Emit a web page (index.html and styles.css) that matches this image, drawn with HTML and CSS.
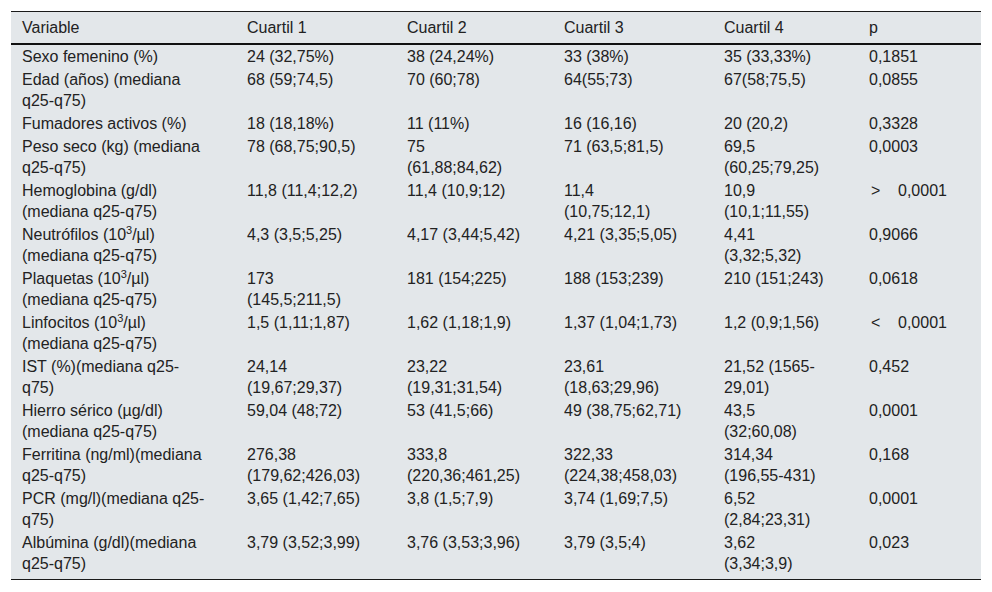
FILE: index.html
```html
<!DOCTYPE html>
<html lang="es">
<head>
<meta charset="utf-8">
<title>Tabla cuartiles</title>
<link rel="stylesheet" href="styles.css">
</head>
<body>
<div class="wrap">
<table class="data">
<colgroup>
<col class="c1"><col class="c2"><col class="c3"><col class="c4"><col class="c5"><col class="c6">
</colgroup>
<thead>
<tr><th>Variable</th><th>Cuartil 1</th><th>Cuartil 2</th><th>Cuartil 3</th><th>Cuartil 4</th><th>p</th></tr>
</thead>
<tbody>
<tr><td>Sexo femenino (%)</td><td>24 (32,75%)</td><td>38 (24,24%)</td><td>33 (38%)</td><td>35 (33,33%)</td><td>0,1851</td></tr>
<tr><td>Edad (años) (mediana<br>q25-q75)</td><td>68 (59;74,5)</td><td>70 (60;78)</td><td>64(55;73)</td><td>67(58;75,5)</td><td>0,0855</td></tr>
<tr><td>Fumadores activos (%)</td><td>18 (18,18%)</td><td>11 (11%)</td><td>16 (16,16)</td><td>20 (20,2)</td><td>0,3328</td></tr>
<tr><td>Peso seco (kg) (mediana<br>q25-q75)</td><td>78 (68,75;90,5)</td><td>75<br>(61,88;84,62)</td><td>71 (63,5;81,5)</td><td>69,5<br>(60,25;79,25)</td><td>0,0003</td></tr>
<tr><td>Hemoglobina (g/dl)<br>(mediana q25-q75)</td><td>11,8 (11,4;12,2)</td><td>11,4 (10,9;12)</td><td>11,4<br>(10,75;12,1)</td><td>10,9<br>(10,1;11,55)</td><td><span class="op">&gt;</span>0,0001</td></tr>
<tr><td>Neutrófilos (10<sup>3</sup>/µl)<br>(mediana q25-q75)</td><td>4,3 (3,5;5,25)</td><td>4,17 (3,44;5,42)</td><td>4,21 (3,35;5,05)</td><td>4,41<br>(3,32;5,32)</td><td>0,9066</td></tr>
<tr><td>Plaquetas (10<sup>3</sup>/µl)<br>(mediana q25-q75)</td><td>173<br>(145,5;211,5)</td><td>181 (154;225)</td><td>188 (153;239)</td><td>210 (151;243)</td><td>0,0618</td></tr>
<tr><td>Linfocitos (10<sup>3</sup>/µl)<br>(mediana q25-q75)</td><td>1,5 (1,11;1,87)</td><td>1,62 (1,18;1,9)</td><td>1,37 (1,04;1,73)</td><td>1,2 (0,9;1,56)</td><td><span class="op">&lt;</span>0,0001</td></tr>
<tr><td>IST (%)(mediana q25-<br>q75)</td><td>24,14<br>(19,67;29,37)</td><td>23,22<br>(19,31;31,54)</td><td>23,61<br>(18,63;29,96)</td><td>21,52 (1565-<br>29,01)</td><td>0,452</td></tr>
<tr><td>Hierro sérico (µg/dl)<br>(mediana q25-q75)</td><td>59,04 (48;72)</td><td>53 (41,5;66)</td><td>49 (38,75;62,71)</td><td>43,5<br>(32;60,08)</td><td>0,0001</td></tr>
<tr><td>Ferritina (ng/ml)(mediana<br>q25-q75)</td><td>276,38<br>(179,62;426,03)</td><td>333,8<br>(220,36;461,25)</td><td>322,33<br>(224,38;458,03)</td><td>314,34<br>(196,55-431)</td><td>0,168</td></tr>
<tr><td>PCR (mg/l)(mediana q25-<br>q75)</td><td>3,65 (1,42;7,65)</td><td>3,8 (1,5;7,9)</td><td>3,74 (1,69;7,5)</td><td>6,52<br>(2,84;23,31)</td><td>0,0001</td></tr>
<tr class="last"><td>Albúmina (g/dl)(mediana<br>q25-q75)</td><td>3,79 (3,52;3,99)</td><td>3,76 (3,53;3,96)</td><td>3,79 (3,5;4)</td><td>3,62<br>(3,34;3,9)</td><td>0,023</td></tr>
</tbody>
</table>
</div>
</body>
</html>
```
FILE: styles.css
```css
html, body {
  margin: 0;
  padding: 0;
  background: #ffffff;
}
.wrap {
  padding: 11px 11px 0 11px;
}
.data {
  width: 970px;
  border-collapse: collapse;
  table-layout: fixed;
  background: #e3e7ea;
  font-family: "Liberation Sans", Arial, sans-serif;
  font-size: 16px;
  line-height: 21px;
  color: #222222;
  border-top: 1px solid #1a1a1a;
  border-bottom: 1px solid #1a1a1a;
}
.c1 { width: 225px; }
.c2 { width: 160px; }
.c3 { width: 157px; }
.c4 { width: 160px; }
.c5 { width: 145px; }
.c6 { width: 123px; }
.data th {
  font-weight: normal;
  text-align: left;
  padding: 5px 0 5px 11px;
  border-bottom: 2px solid #111111;
  vertical-align: top;
  white-space: nowrap;
}
.data td {
  padding: 1px 0 1px 11px;
  vertical-align: top;
  white-space: nowrap;
}
.data tr.last td {
  padding-bottom: 5px;
}
.data sup {
  font-size: 11px;
  line-height: 0;
  vertical-align: 6px;
}
.op {
  display: inline-block;
  width: 27px;
  padding-left: 2px;
}
```
